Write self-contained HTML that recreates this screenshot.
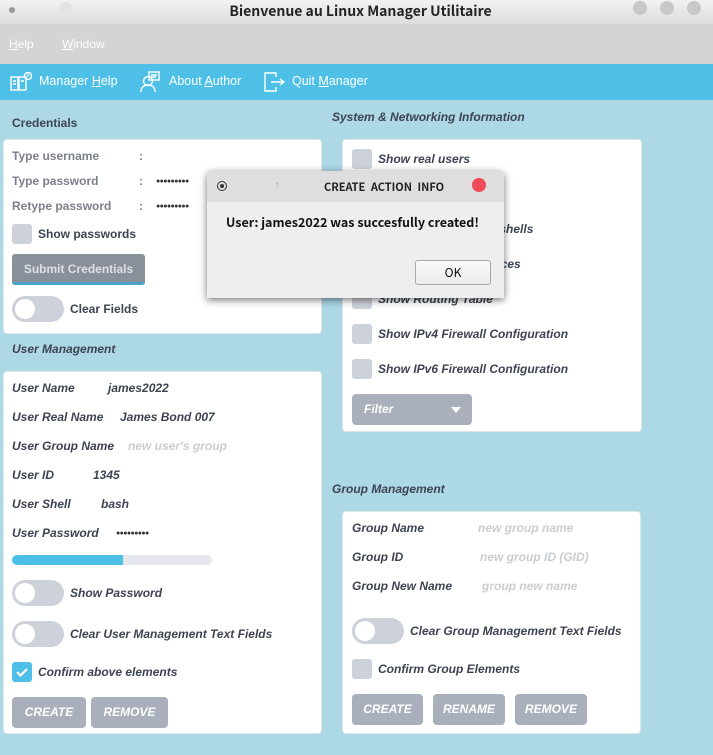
<!DOCTYPE html>
<html><head><meta charset="utf-8"><style>
*{margin:0;padding:0;box-sizing:border-box}
body{width:713px;height:755px;overflow:hidden;background:#add8e6;font-family:"Liberation Sans",sans-serif;position:relative}
.a{position:absolute}
.t{position:absolute;font-weight:bold;font-size:12px;color:#3d4451;line-height:16px;white-space:nowrap}
.i{font-style:italic}
.ph{color:#c9cdd2}
.panel{position:absolute;background:#fff;border-radius:4px;border:1px solid #dfe6ea}
.cb{position:absolute;width:20px;height:20px;background:#cdd1d9;border-radius:3px}
.tg{position:absolute;width:52px;height:26px;background:#cdd1d9;border-radius:13px}
.tg::after{content:"";position:absolute;left:3px;top:3px;width:20px;height:20px;border-radius:50%;background:#fff}
.btn{position:absolute;height:31px;background:#a9b0bb;border-radius:4px;color:#fff;font-weight:bold;font-style:italic;font-size:12px;line-height:31px;text-align:center}
.dot{position:absolute;width:14px;height:14px;border-radius:50%;background:#c8c8c8;top:1px}
.mi{position:absolute;color:#fff;font-size:12.5px;top:74px}
.pw{position:absolute;font-size:7px;letter-spacing:-0.6px;color:#333;font-weight:bold}
.ns{font-family:"Noto Sans CJK SC","DejaVu Sans",sans-serif}
</style></head><body>
<div class="a" style="left:0;top:0;width:713px;height:24px;background:linear-gradient(#f2f2f2,#dcdcdc)"></div>
<div class="a" style="left:9px;top:7px;width:6px;height:6px;border-radius:50%;background:#999"></div>
<div class="a" style="left:59px;top:2px;width:14px;height:14px;border-radius:50%;background:#e4e4e4"></div>
<div class="a ns" style="left:4px;top:1px;width:713px;text-align:center;font-weight:bold;font-size:14px;line-height:20px;color:#222">Bienvenue au Linux Manager Utilitaire</div>
<div class="dot" style="left:633px"></div><div class="dot" style="left:660px"></div><div class="dot" style="left:687px"></div>
<div class="a" style="left:0;top:24px;width:713px;height:40px;background:#d4d4d4"></div>
<div class="a" style="left:9px;top:37px;color:#fff;font-size:12px"><u>H</u>elp</div>
<div class="a" style="left:62px;top:37px;color:#fff;font-size:12px"><u>W</u>indow</div>
<div class="a" style="left:0;top:64px;width:713px;height:36px;background:#4ec0e8"></div>
<svg class="a" style="left:10px;top:72px" width="22" height="20" fill="none" stroke="#fff" stroke-width="1.4"><rect x="1" y="5" width="7" height="13"/><rect x="9" y="5" width="7" height="13"/><circle cx="18" cy="4" r="3.5"/><path d="M18 2v2.5M3 9h3M3 12h3M11 9h3"/></svg>
<div class="mi" style="left:39px">Manager <u>H</u>elp</div>
<svg class="a" style="left:139px;top:71px" width="22" height="22" fill="none" stroke="#fff" stroke-width="1.4"><rect x="10" y="1" width="10" height="8"/><path d="M12 4h6M12 6h5"/><circle cx="9" cy="10" r="4.5"/><path d="M2 21c0-5 3-7 7-7s7 2 7 7"/></svg>
<div class="mi" style="left:169px">About <u>A</u>uthor</div>
<svg class="a" style="left:264px;top:72px" width="22" height="20" fill="none" stroke="#fff" stroke-width="1.4"><path d="M12 5V1H1v18h11v-4"/><path d="M7 10h13M16 7l4 3-4 3"/></svg>
<div class="mi" style="left:292px">Quit <u>M</u>anager</div>

<div class="t" style="left:12px;top:115px">Credentials</div>
<div class="panel" style="left:3px;top:139px;width:319px;height:195px"></div>
<div class="t" style="left:12px;top:148px;color:#7b818b">Type username</div><div class="t" style="left:139px;top:148px;color:#7b818b">:</div>
<div class="t" style="left:12px;top:173px;color:#7b818b">Type password</div><div class="t" style="left:139px;top:173px;color:#7b818b">:</div>
<div class="t" style="left:12px;top:198px;color:#7b818b">Retype password</div><div class="t" style="left:139px;top:198px;color:#7b818b">:</div>
<div class="pw" style="left:156px;top:178px">●●●●●●●●●</div>
<div class="pw" style="left:156px;top:203px">●●●●●●●●●</div>
<div class="cb" style="left:12px;top:224px"></div>
<div class="t" style="left:38px;top:226px">Show passwords</div>
<div class="a" style="left:12px;top:254px;width:133px;height:31px;background:#8a9099;border-radius:3px;border-bottom:3px solid #48a4c8;color:#dde1e6;font-weight:bold;font-size:12px;text-align:center;line-height:30px">Submit Credentials</div>
<div class="tg" style="left:12px;top:296px"></div>
<div class="t" style="left:70px;top:301px">Clear Fields</div>

<div class="t i" style="left:12px;top:341px">User Management</div>
<div class="panel" style="left:3px;top:371px;width:319px;height:363px"></div>
<div class="t i" style="left:12px;top:380px">User Name</div><div class="t i" style="left:108px;top:380px">james2022</div>
<div class="t i" style="left:12px;top:409px">User Real Name</div><div class="t i" style="left:120px;top:409px">James Bond 007</div>
<div class="t i" style="left:12px;top:438px">User Group Name</div><div class="t i ph" style="left:128px;top:438px">new user's group</div>
<div class="t i" style="left:12px;top:467px">User ID</div><div class="t i" style="left:93px;top:467px">1345</div>
<div class="t i" style="left:12px;top:496px">User Shell</div><div class="t i" style="left:101px;top:496px">bash</div>
<div class="t i" style="left:12px;top:525px">User Password</div><div class="pw" style="left:116px;top:530px">●●●●●●●●●</div>
<div class="a" style="left:12px;top:555px;width:200px;height:10px;border-radius:5px;background:#e4e7ec;overflow:hidden"><div style="width:111px;height:10px;background:#4ec0e8"></div></div>
<div class="tg" style="left:12px;top:580px"></div><div class="t i" style="left:70px;top:585px">Show Password</div>
<div class="tg" style="left:12px;top:621px"></div><div class="t i" style="left:70px;top:626px">Clear User Management Text Fields</div>
<div class="cb" style="left:12px;top:662px;background:#4ec0e8"><svg width="20" height="20"><path d="M5 10l3.5 3.5L15 7" stroke="#fff" stroke-width="2.2" fill="none"/></svg></div>
<div class="t i" style="left:38px;top:664px">Confirm above elements</div>
<div class="btn" style="left:12px;top:697px;width:74px">CREATE</div>
<div class="btn" style="left:91px;top:697px;width:77px">REMOVE</div>

<div class="t i" style="left:332px;top:109px">System &amp; Networking Information</div>
<div class="panel" style="left:342px;top:139px;width:300px;height:293px"></div>
<div class="cb" style="left:352px;top:149px"></div><div class="t i" style="left:378px;top:151px">Show real users</div>
<div class="cb" style="left:352px;top:184px"></div><div class="t i" style="left:378px;top:186px">Show logged users</div>
<div class="cb" style="left:352px;top:219px"></div><div class="t i" style="left:378px;top:221px">Show available login shells</div>
<div class="cb" style="left:352px;top:254px"></div><div class="t i" style="left:378px;top:256px">Show Network Interfaces</div>
<div class="cb" style="left:352px;top:289px"></div><div class="t i" style="left:378px;top:291px">Show Routing Table</div>
<div class="cb" style="left:352px;top:324px"></div><div class="t i" style="left:378px;top:326px">Show IPv4 Firewall Configuration</div>
<div class="cb" style="left:352px;top:359px"></div><div class="t i" style="left:378px;top:361px">Show IPv6 Firewall Configuration</div>
<div class="btn" style="left:352px;top:394px;width:120px;text-align:left;padding-left:12px">Filter</div>
<svg class="a" style="left:451px;top:407px" width="10" height="6"><path d="M0 0h10L5 6z" fill="#fff"/></svg>

<div class="t i" style="left:332px;top:481px">Group Management</div>
<div class="panel" style="left:342px;top:511px;width:299px;height:223px"></div>
<div class="t i" style="left:352px;top:520px">Group Name</div><div class="t i ph" style="left:478px;top:520px">new group name</div>
<div class="t i" style="left:352px;top:549px">Group ID</div><div class="t i ph" style="left:480px;top:549px">new group ID (GID)</div>
<div class="t i" style="left:352px;top:578px">Group New Name</div><div class="t i ph" style="left:482px;top:578px">group new name</div>
<div class="tg" style="left:352px;top:618px"></div><div class="t i" style="left:410px;top:623px">Clear Group Management Text Fields</div>
<div class="cb" style="left:352px;top:659px"></div><div class="t i" style="left:378px;top:661px">Confirm Group Elements</div>
<div class="btn" style="left:352px;top:694px;width:71px">CREATE</div>
<div class="btn" style="left:433px;top:694px;width:72px">RENAME</div>
<div class="btn" style="left:515px;top:694px;width:72px">REMOVE</div>

<div class="a" style="left:207px;top:171px;width:297px;height:127px;background:#eeeeee;border-radius:5px 5px 0 0;box-shadow:0 2px 8px rgba(0,0,0,.55);overflow:hidden">
<div style="height:31px;background:#dedede"></div>
</div>
<div class="a" style="left:217px;top:181px;width:10px;height:10px;border-radius:50%;border:1.5px solid #333"><div style="margin:1.5px;width:4px;height:4px;border-radius:50%;background:#333"></div></div>
<div class="a" style="left:275px;top:179px;font-size:9px;color:#999">↑</div>
<div class="a ns" style="left:324px;top:179px;font-size:11px;line-height:16px;font-weight:bold;color:#222;word-spacing:3px">CREATE ACTION INFO</div>
<div class="a" style="left:472px;top:178px;width:14px;height:14px;border-radius:50%;background:#ef4a55"></div>
<div class="a ns" style="left:226px;top:213px;font-size:12.5px;line-height:18px;font-weight:bold;color:#111">User: james2022 was succesfully created!</div>
<div class="a ns" style="left:415px;top:260px;width:76px;height:25px;border:1px solid #a8a8a8;border-radius:3px;background:linear-gradient(#fafafa,#ececec);text-align:center;line-height:23px;font-size:12px;color:#111">OK</div>
</body></html>
